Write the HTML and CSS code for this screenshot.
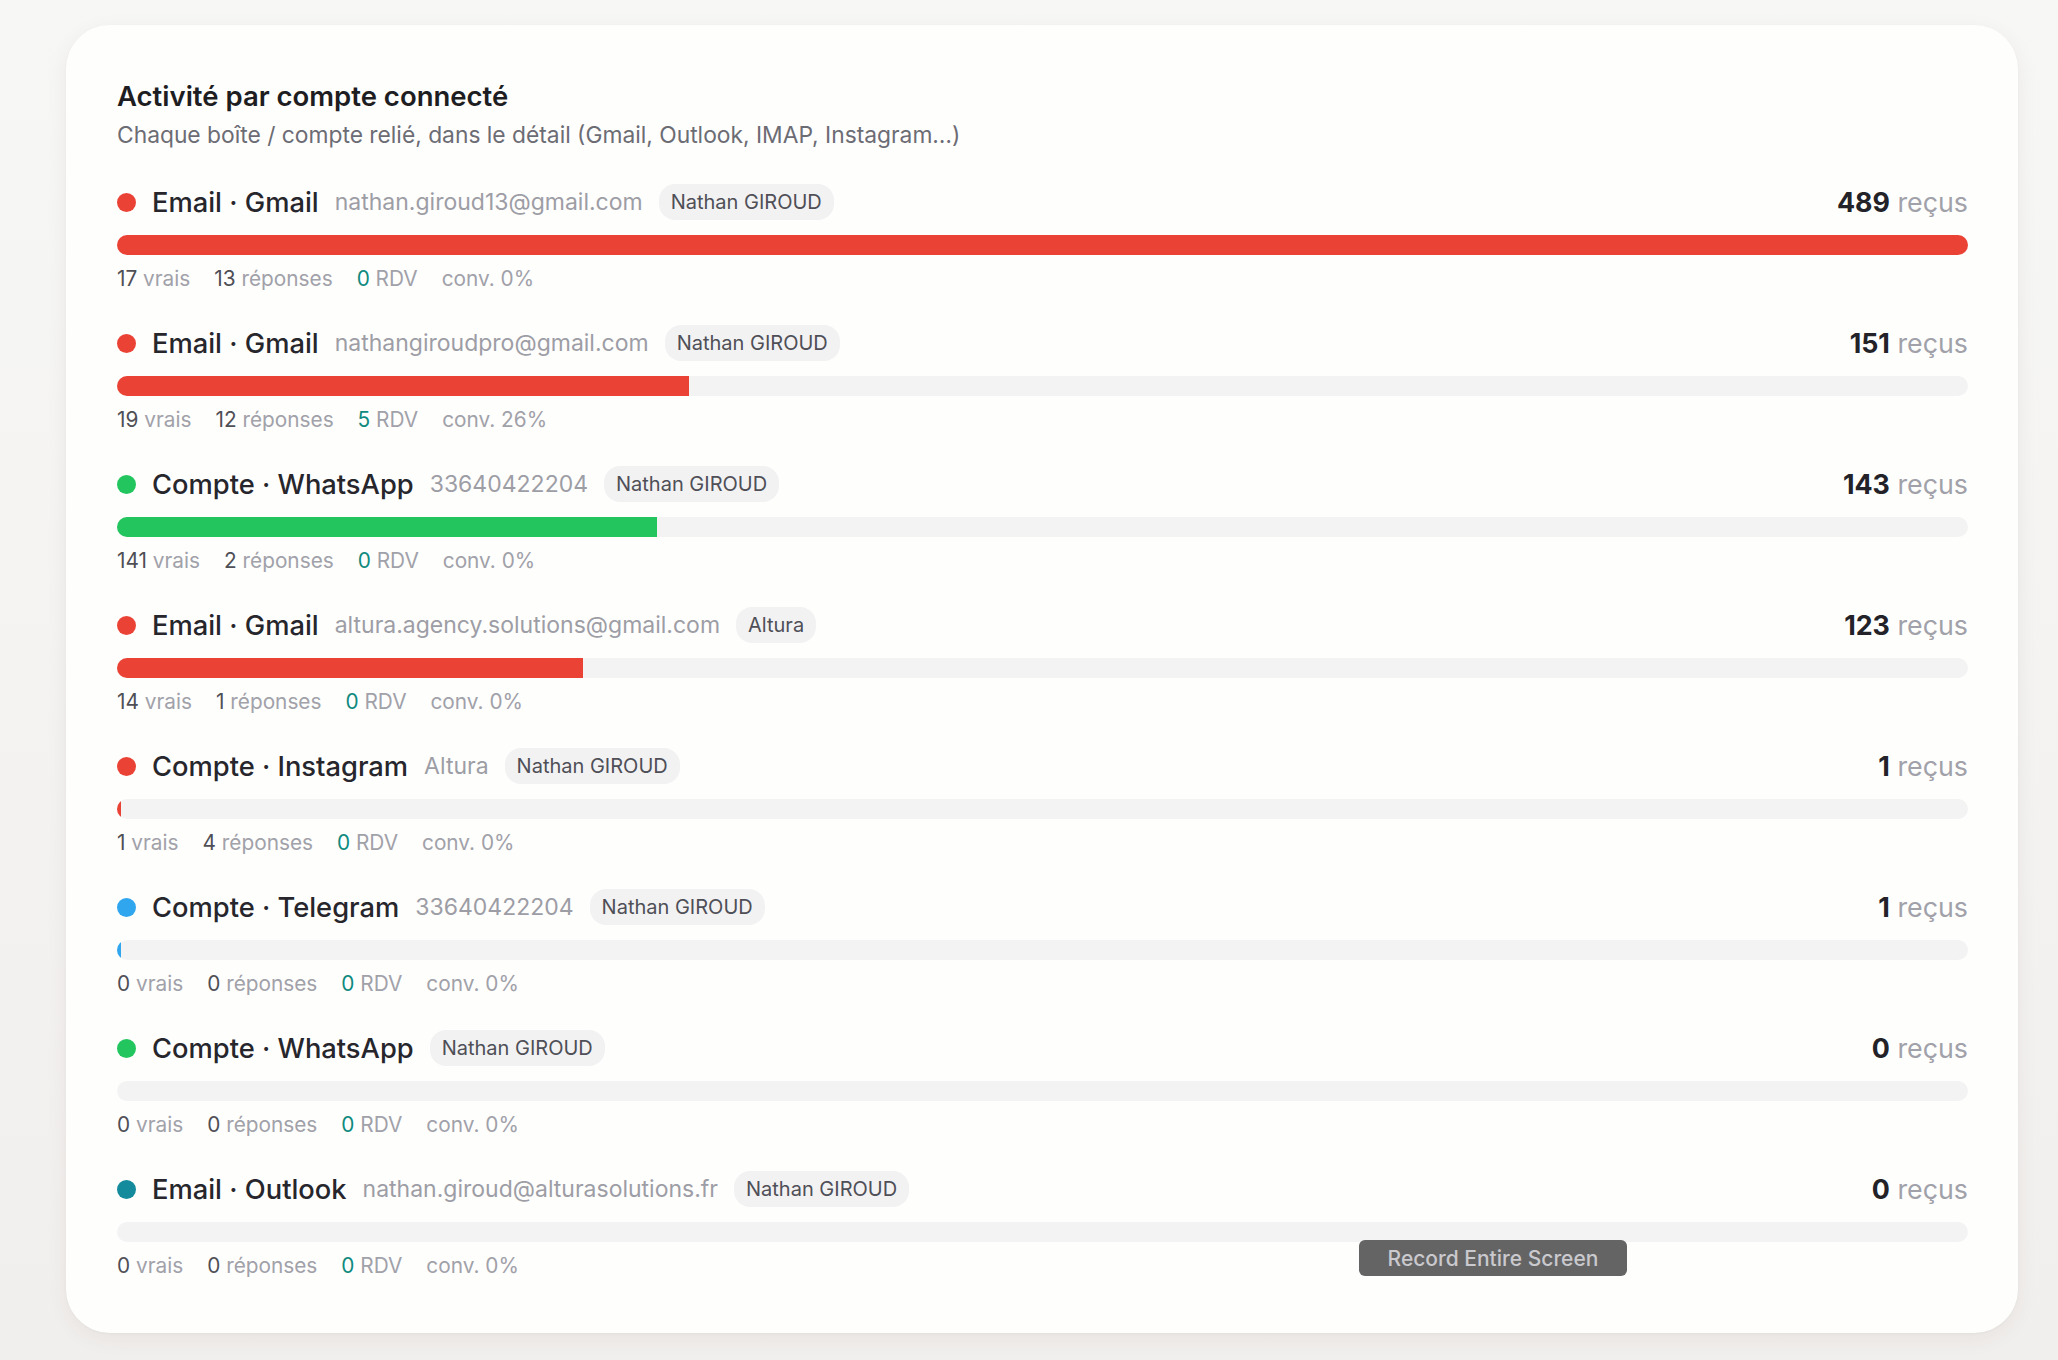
FILE: index.html
```html
<!DOCTYPE html>
<html lang="fr">

<head>
    <meta charset="UTF-8">
    <meta name="viewport" content="width=device-width, initial-scale=1.0">
    <title>Activité par compte connecté</title>
    <link rel="stylesheet" href="styles.css">
</head>

<body>
    <section class="card">
        <h2 class="card-title">Activité par compte connecté</h2>
        <p class="card-subtitle">Chaque boîte / compte relié, dans le détail (Gmail, Outlook, IMAP, Instagram…)</p>

        <div class="accounts">
            <div class="account">
                <div class="account-head">
                    <span class="dot dot-gmail"></span>
                    <span class="account-name">Email · Gmail</span>
                    <span class="account-id">nathan.giroud13@gmail.com</span>
                    <span class="owner">Nathan GIROUD</span>
                    <span class="received"><strong>489</strong> reçus</span>
                </div>
                <div class="track"><div class="fill fill-gmail" style="width: 100%"></div></div>
                <div class="stats">
                    <span><b>17</b> vrais</span>
                    <span><b>13</b> réponses</span>
                    <span><b class="rdv">0</b> RDV</span>
                    <span>conv. 0%</span>
                </div>
            </div>

            <div class="account">
                <div class="account-head">
                    <span class="dot dot-gmail"></span>
                    <span class="account-name">Email · Gmail</span>
                    <span class="account-id">nathangiroudpro@gmail.com</span>
                    <span class="owner">Nathan GIROUD</span>
                    <span class="received"><strong>151</strong> reçus</span>
                </div>
                <div class="track"><div class="fill fill-gmail" style="width: 30.9%"></div></div>
                <div class="stats">
                    <span><b>19</b> vrais</span>
                    <span><b>12</b> réponses</span>
                    <span><b class="rdv">5</b> RDV</span>
                    <span>conv. 26%</span>
                </div>
            </div>

            <div class="account">
                <div class="account-head">
                    <span class="dot dot-whatsapp"></span>
                    <span class="account-name">Compte · WhatsApp</span>
                    <span class="account-id">33640422204</span>
                    <span class="owner">Nathan GIROUD</span>
                    <span class="received"><strong>143</strong> reçus</span>
                </div>
                <div class="track"><div class="fill fill-whatsapp" style="width: 29.2%"></div></div>
                <div class="stats">
                    <span><b>141</b> vrais</span>
                    <span><b>2</b> réponses</span>
                    <span><b class="rdv">0</b> RDV</span>
                    <span>conv. 0%</span>
                </div>
            </div>

            <div class="account">
                <div class="account-head">
                    <span class="dot dot-gmail"></span>
                    <span class="account-name">Email · Gmail</span>
                    <span class="account-id">altura.agency.solutions@gmail.com</span>
                    <span class="owner">Altura</span>
                    <span class="received"><strong>123</strong> reçus</span>
                </div>
                <div class="track"><div class="fill fill-gmail" style="width: 25.2%"></div></div>
                <div class="stats">
                    <span><b>14</b> vrais</span>
                    <span><b>1</b> réponses</span>
                    <span><b class="rdv">0</b> RDV</span>
                    <span>conv. 0%</span>
                </div>
            </div>

            <div class="account">
                <div class="account-head">
                    <span class="dot dot-instagram"></span>
                    <span class="account-name">Compte · Instagram</span>
                    <span class="account-id">Altura</span>
                    <span class="owner">Nathan GIROUD</span>
                    <span class="received"><strong>1</strong> reçus</span>
                </div>
                <div class="track"><div class="fill fill-instagram" style="width: 0.2%"></div></div>
                <div class="stats">
                    <span><b>1</b> vrais</span>
                    <span><b>4</b> réponses</span>
                    <span><b class="rdv">0</b> RDV</span>
                    <span>conv. 0%</span>
                </div>
            </div>

            <div class="account">
                <div class="account-head">
                    <span class="dot dot-telegram"></span>
                    <span class="account-name">Compte · Telegram</span>
                    <span class="account-id">33640422204</span>
                    <span class="owner">Nathan GIROUD</span>
                    <span class="received"><strong>1</strong> reçus</span>
                </div>
                <div class="track"><div class="fill fill-telegram" style="width: 0.2%"></div></div>
                <div class="stats">
                    <span><b>0</b> vrais</span>
                    <span><b>0</b> réponses</span>
                    <span><b class="rdv">0</b> RDV</span>
                    <span>conv. 0%</span>
                </div>
            </div>

            <div class="account">
                <div class="account-head">
                    <span class="dot dot-whatsapp"></span>
                    <span class="account-name">Compte · WhatsApp</span>
                    <span class="owner">Nathan GIROUD</span>
                    <span class="received"><strong>0</strong> reçus</span>
                </div>
                <div class="track"><div class="fill fill-whatsapp" style="width: 0%"></div></div>
                <div class="stats">
                    <span><b>0</b> vrais</span>
                    <span><b>0</b> réponses</span>
                    <span><b class="rdv">0</b> RDV</span>
                    <span>conv. 0%</span>
                </div>
            </div>

            <div class="account">
                <div class="account-head">
                    <span class="dot dot-outlook"></span>
                    <span class="account-name">Email · Outlook</span>
                    <span class="account-id">nathan.giroud@alturasolutions.fr</span>
                    <span class="owner">Nathan GIROUD</span>
                    <span class="received"><strong>0</strong> reçus</span>
                </div>
                <div class="track"><div class="fill fill-outlook" style="width: 0%"></div></div>
                <div class="stats">
                    <span><b>0</b> vrais</span>
                    <span><b>0</b> réponses</span>
                    <span><b class="rdv">0</b> RDV</span>
                    <span>conv. 0%</span>
                </div>
            </div>
        </div>
    </section>

    <div class="record-hint">Record Entire Screen</div>
</body>

</html>
```

FILE: styles.css
```css
* {
    box-sizing: border-box;
}

body {
    margin: 0;
    min-height: 1360px;
    padding: 25px 40px 27px 66px;
    font-family: Inter, "Noto Sans", sans-serif;
    color: #1f1f24;
    background: linear-gradient(180deg, #f7f7f6 0%, #f1efed 100%);
}

.card {
    height: 1308px;
    padding: 55px 50px 0 51px;
    background: #fefefd;
    border-radius: 44px;
    box-shadow: 0 6px 22px rgba(60, 40, 20, 0.06), 0 1px 3px rgba(0, 0, 0, 0.03);
}

.card-title {
    margin: 0;
    font-size: 27.5px;
    line-height: 32px;
    font-weight: 600;
    color: #1d1d22;
}

.card-subtitle {
    margin: 9px 0 0;
    font-size: 22.8px;
    line-height: 28px;
    color: #6c6c74;
}

.accounts {
    margin-top: 35px;
    display: flex;
    flex-direction: column;
    gap: 34px;
}

.account-head {
    height: 36px;
    display: flex;
    align-items: center;
}

.dot {
    width: 19px;
    height: 19px;
    border-radius: 50%;
    margin-right: 16px;
    flex-shrink: 0;
}

.dot-gmail,
.fill-gmail {
    background: #ea4335;
}

.dot-whatsapp,
.fill-whatsapp {
    background: #22c55e;
}

.dot-instagram,
.fill-instagram {
    background: #ea4335;
}

.dot-telegram,
.fill-telegram {
    background: #30a6ee;
}

.dot-outlook,
.fill-outlook {
    background: #138b9c;
}

.account-name {
    font-size: 27.3px;
    font-weight: 500;
    color: #26262c;
    margin-right: 16px;
}

.account-id {
    font-size: 23px;
    color: #9d9da5;
    margin-right: 16px;
}

.owner {
    height: 36px;
    padding: 0 12px;
    display: flex;
    align-items: center;
    border-radius: 16px;
    background: #f2f2f3;
    font-size: 20px;
    color: #4f4f57;
}

.received {
    margin-left: auto;
    font-size: 26.8px;
    color: #a1a1a9;
}

.received strong {
    font-weight: 700;
    color: #222228;
}

.track {
    margin-top: 15px;
    height: 20px;
    border-radius: 10px;
    background: #f3f3f4;
    overflow: hidden;
}

.fill {
    height: 100%;
}

.stats {
    margin-top: 12px;
    display: flex;
    gap: 24px;
    font-size: 20.8px;
    line-height: 24px;
    color: #a1a1a9;
}

.stats b {
    font-weight: 400;
    color: #4f4f56;
}

.stats b.rdv {
    color: #0f8a7e;
}

.record-hint {
    position: absolute;
    left: 1359px;
    top: 1240px;
    width: 268px;
    height: 36px;
    border-radius: 6px;
    background: #646464;
    color: #c9c9ce;
    font-size: 21px;
    font-weight: 500;
    display: flex;
    align-items: center;
    justify-content: center;
}
```
